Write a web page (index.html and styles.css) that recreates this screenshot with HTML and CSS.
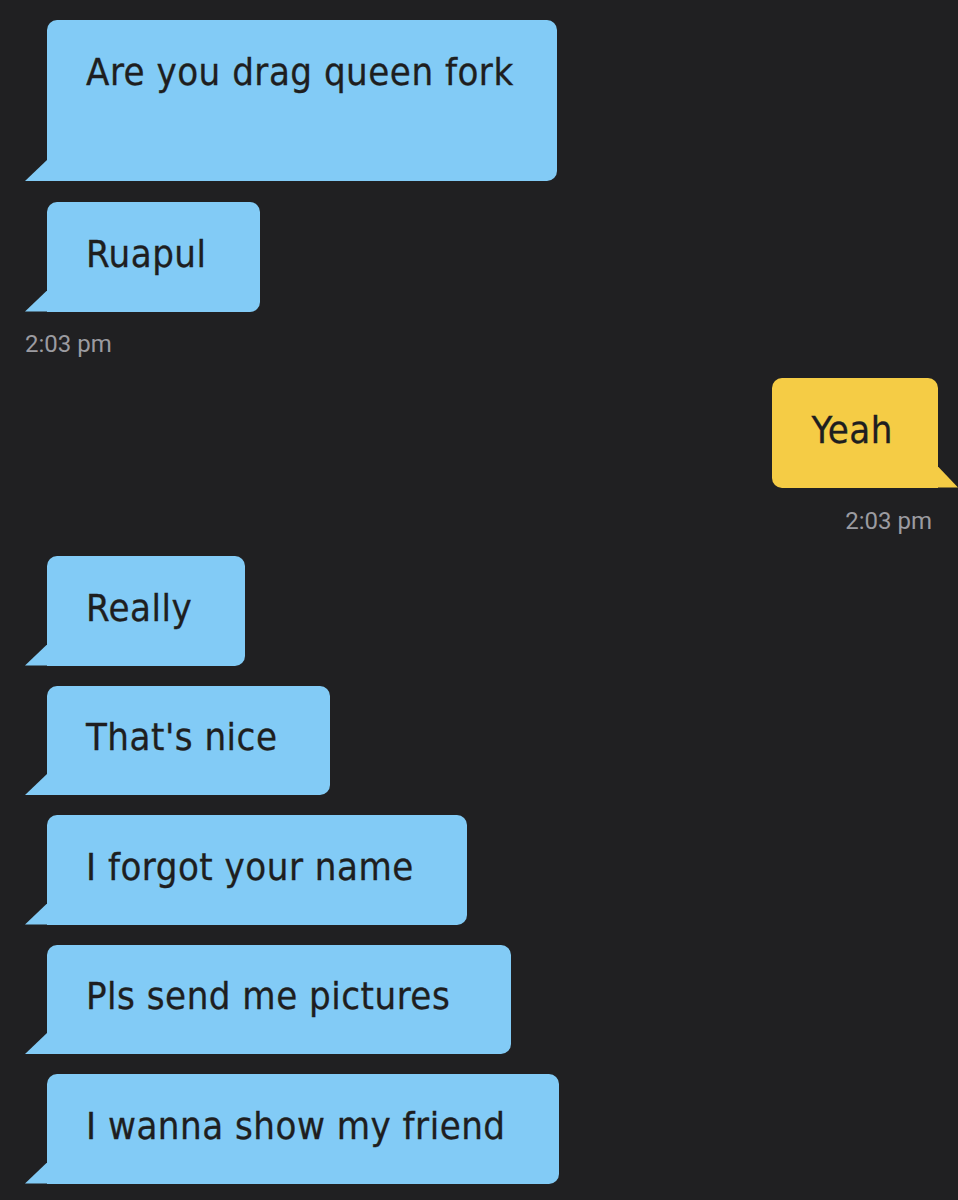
FILE: index.html
```html
<!DOCTYPE html>
<html lang="en">
  <head>
    <meta charset="UTF-8" />
    <title>Chat</title>
    <link rel="stylesheet" href="styles.css">
  </head>
  <body>
    <div class="chat">
      <!-- Them -->
      <div class="msg them tall">Are you drag queen fork</div>
      <div class="msg them">Ruapul</div>
      <div class="time">2:03 pm</div>

      <!-- Me -->
      <div class="msg me">Yeah</div>
      <div class="time right">2:03 pm</div>

      <!-- Them again -->
      <div class="msg them">Really</div>
      <div class="msg them">That's nice</div>
      <div class="msg them">I forgot your name</div>
      <div class="msg them wide">Pls send me pictures</div>
      <div class="msg them">I wanna show my friend</div>
    </div>
  </body>
</html>
```
FILE: styles.css
```css
body {
  margin: 0;
  padding: 0;
  background: #202022;
  font-family: "DejaVu Sans Condensed", "DejaVu Sans", sans-serif;
  overflow: hidden;
}

.chat {
  display: flex;
  flex-direction: column;
  align-items: flex-start;
  padding: 20px 0 0 25px;
}

/* Bubbles */
.msg {
  position: relative;
  box-sizing: border-box;
  height: 109.5px;
  margin: 0 0 20px 22px;
  padding: 26.5px 53px 0 39px;
  border-radius: 10px 10px 10px 0;
  color: #1e1e20;
  font-size: 38px;
  line-height: 50px;
  letter-spacing: 0.5px;
  -webkit-text-stroke: 0.3px #1e1e20;
}
.msg::before {
  content: "";
  position: absolute;
  bottom: 0;
  width: 22px;
  height: 21px;
  background: inherit;
}

.them {
  background: #82cbf6;
}
.them::before {
  left: -22px;
  clip-path: polygon(100% 0, 100% 100%, 0 100%);
}
.tall {
  height: 161px;
  margin-bottom: 21px;
  padding-right: 43px;
}
.wide {
  padding-right: 61px;
}

.me {
  align-self: flex-end;
  margin: 0 20px 20px 0;
  padding: 26.5px 45px 0 40px;
  border-radius: 10px 10px 0 10px;
  background: #f5cc45;
}
.me::before {
  right: -20px;
  width: 20px;
  clip-path: polygon(0 0, 100% 100%, 0 100%);
}

/* Timestamps */
.time {
  margin: -1.5px 0 20px 0;
  color: #9b9ba0;
  font-family: Roboto, "Liberation Sans", sans-serif;
  font-size: 24px;
  line-height: 28px;
}
.time.right {
  align-self: flex-end;
  margin: -0.5px 26px 21px 0;
}
```
